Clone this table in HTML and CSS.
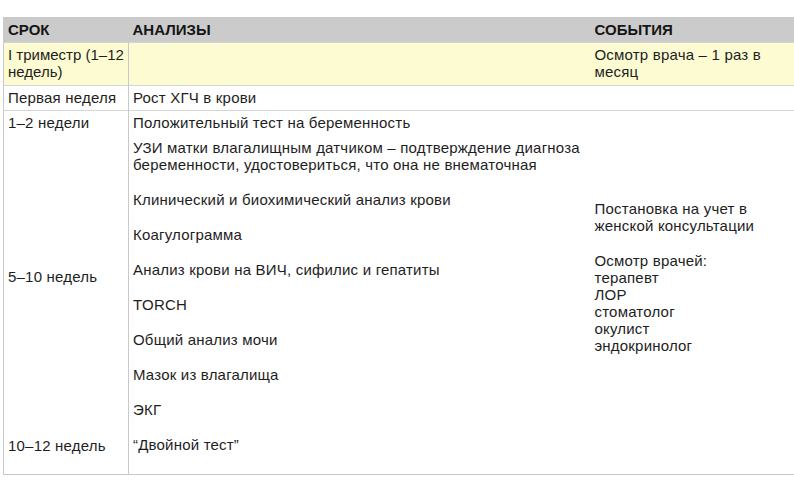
FILE: index.html
```html
<!DOCTYPE html>
<html lang="ru">
<head>
<meta charset="utf-8">
<link rel="stylesheet" href="styles.css">
</head>
<body>
<table class="plan">
  <colgroup>
    <col class="c-term">
    <col class="c-tests">
    <col class="c-events">
  </colgroup>
  <thead>
    <tr>
      <th>СРОК</th>
      <th>АНАЛИЗЫ</th>
      <th>СОБЫТИЯ</th>
    </tr>
  </thead>
  <tbody>
    <tr class="trimester">
      <td class="b-right tight"><span class="nw">I триместр (1–12</span> недель)</td>
      <td></td>
      <td>Осмотр врача – 1 раз в месяц</td>
    </tr>
    <tr>
      <td class="b-right">Первая неделя</td>
      <td>Рост ХГЧ в крови</td>
      <td></td>
    </tr>
    <tr class="big">
      <td class="b-right">
        <p>1–2 недели</p>
        <p class="t2">5–10 недель</p>
        <p class="t3">10–12 недель</p>
      </td>
      <td>
        <p>Положительный тест на беременность</p>
        <p class="near">УЗИ матки влагалищным датчиком – подтверждение диагноза беременности, удостовериться, что она не внематочная</p>
        <p class="sp">Клинический и биохимический анализ крови</p>
        <p class="sp">Коагулограмма</p>
        <p class="sp">Анализ крови на ВИЧ, сифилис и гепатиты</p>
        <p class="sp">TORCH</p>
        <p class="sp">Общий анализ мочи</p>
        <p class="sp">Мазок из влагалища</p>
        <p class="sp">ЭКГ</p>
        <p class="sp">“Двойной тест”</p>
      </td>
      <td>
        <p class="e1">Постановка на учет в женской консультации</p>
        <p class="sp">Осмотр врачей:<br>терапевт<br>ЛОР<br>стоматолог<br>окулист<br>эндокринолог</p>
      </td>
    </tr>
  </tbody>
</table>
</body>
</html>
```

FILE: styles.css
```css
html, body {
  background: #ffffff;
}
body {
  margin: 17px 0 0 3px;
  font-family: "Liberation Sans", Arial, sans-serif;
  font-size: 15px;
  letter-spacing: 0.2px;
  line-height: 17px;
  color: #1e1e1e;
}
.plan {
  border-collapse: collapse;
  table-layout: fixed;
  width: 791px;
  border: 1px solid #c9c9c9;
}
.c-term { width: 125px; }
.c-tests { width: 462px; }
.c-events { width: 204px; }
.plan th {
  background: #cbcbcb;
  text-align: left;
  font-weight: bold;
  letter-spacing: 0;
  padding: 3px 2px 4px 4px;
  color: #151515;
}
.plan td {
  vertical-align: top;
  padding: 3px 2px 4px 4px;
  border-top: 1px solid #d4d4d4;
}
.plan td.b-right {
  border-right: 1px solid #c9c9c9;
}
.plan td.tight {
  letter-spacing: 0;
  padding-right: 0;
}
.nw {
  white-space: nowrap;
}
.trimester td {
  background: #fdfbd2;
  padding-bottom: 5px;
}
.plan p {
  margin: 0;
}
.plan p.near { margin-top: 8px; }
.plan p.sp { margin-top: 18px; }
.plan p.t2 { margin-top: 137px; }
.plan p.t3 { margin-top: 152px; }
.plan p.e1 { margin-top: 86px; }
.big td { padding-bottom: 20px; }
```
